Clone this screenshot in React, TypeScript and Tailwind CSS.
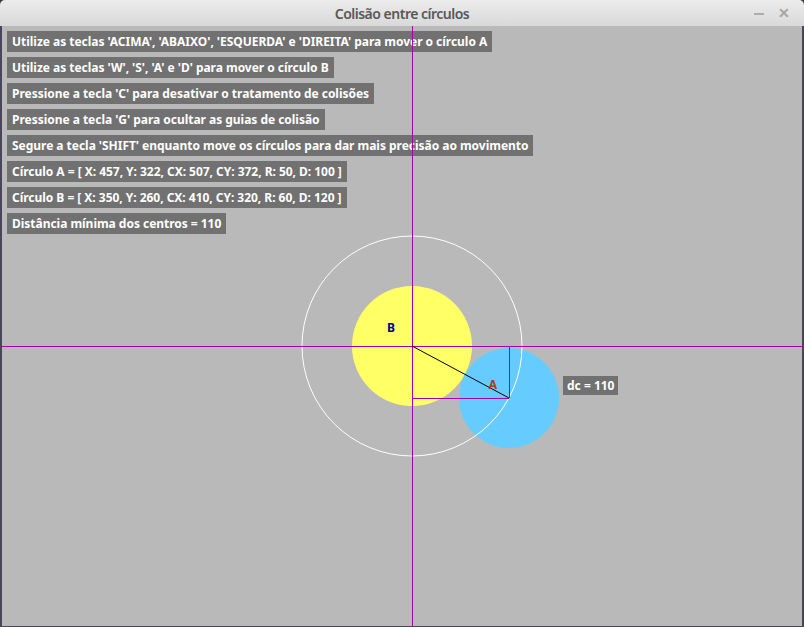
import React from "react";

const lines = [
  "Utilize as teclas 'ACIMA', 'ABAIXO', 'ESQUERDA' e 'DIREITA' para mover o círculo A",
  "Utilize as teclas 'W', 'S', 'A' e 'D' para mover o círculo B",
  "Pressione a tecla 'C' para desativar o tratamento de colisões",
  "Pressione a tecla 'G' para ocultar as guias de colisão",
  "Segure a tecla 'SHIFT' enquanto move os círculos para dar mais precisão ao movimento",
  "Círculo A = [ X: 457, Y: 322, CX: 507, CY: 372, R: 50, D: 100 ]",
  "Círculo B = [ X: 350, Y: 260, CX: 410, CY: 320, R: 60, D: 120 ]",
  "Distância mínima dos centros = 110",
];

const InfoLabel: React.FC<{ text: string }> = ({ text }) => (
  <div className="w-fit h-[21px] px-[5px] bg-[#717171] text-white text-[12px] leading-[21px] font-bold tracking-[-0.03px] whitespace-nowrap">
    {text}
  </div>
);

const App: React.FC = () => {
  const a = { cx: 507, cy: 372, r: 50 };
  const b = { cx: 410, cy: 320, r: 60 };

  return (
    <div className="w-[804px] h-[627px] bg-[#3b3b3b] font-['Noto_Sans',sans-serif] overflow-hidden">
      <div className="w-full h-full flex flex-col rounded-t-[5px] overflow-hidden bg-[#4a4659]">
        {/* Title bar */}
        <div className="h-[26px] shrink-0 flex items-center relative bg-gradient-to-b from-[#ececec] to-[#d9d9d9]">
          <span className="flex-1 text-center text-[14px] font-semibold text-[#585858] tracking-[-0.5px]">
            Colisão entre círculos
          </span>
          <div className="absolute right-[14px] top-0 h-full flex items-center gap-[14px] text-[#a5a5a5]">
            <span className="w-[10px] h-[2px] bg-[#acacac] mt-[2px]" />
            <span className="text-[14px] font-bold leading-none">✕</span>
          </div>
        </div>

        {/* Canvas */}
        <div className="flex-1 flex px-[2px] pb-[1px]">
          <div className="relative w-[800px] h-[600px] bg-[#b9b9b9]">
            <div className="flex flex-col gap-[5px] pt-[5px] pl-[5px]">
              {lines.map((t) => (
                <InfoLabel key={t} text={t} />
              ))}
            </div>

            <svg
              className="absolute inset-0 pointer-events-none"
              width={800}
              height={600}
              viewBox="0 0 800 600"
            >
              <circle cx={b.cx} cy={b.cy} r={b.r} fill="#ffff66" />
              <circle cx={a.cx} cy={a.cy} r={a.r} fill="#66ccff" />
              <circle cx={b.cx} cy={b.cy} r={110} fill="none" stroke="#ffffff" strokeWidth={1} />

              <line x1={b.cx + 0.5} y1={0} x2={b.cx + 0.5} y2={600} stroke="#aa00aa" />
              <line x1={0} y1={b.cy + 0.5} x2={800} y2={b.cy + 0.5} stroke="#aa00aa" />
              <line x1={a.cx + 0.5} y1={b.cy} x2={a.cx + 0.5} y2={a.cy} stroke="#aa00aa" />
              <line x1={b.cx} y1={a.cy + 0.5} x2={a.cx} y2={a.cy + 0.5} stroke="#aa00aa" />
              <line x1={b.cx} y1={b.cy} x2={a.cx} y2={a.cy} stroke="#000000" />

              <text x={389} y={306} textAnchor="middle" fontSize={12} fontWeight={700} fill="#00009a" fontFamily="Noto Sans, sans-serif">
                B
              </text>
              <text x={491} y={363} textAnchor="middle" fontSize={12} fontWeight={700} fill="#a3420c" fontFamily="Noto Sans, sans-serif">
                A
              </text>
            </svg>

            {/* dc label */}
            <div className="absolute left-[561px] top-[350px] h-[19px] px-[4px] bg-[#717171] text-white text-[12px] leading-[19px] font-bold whitespace-nowrap">
              dc = 110
            </div>
          </div>
        </div>
      </div>
    </div>
  );
};

export default App;
